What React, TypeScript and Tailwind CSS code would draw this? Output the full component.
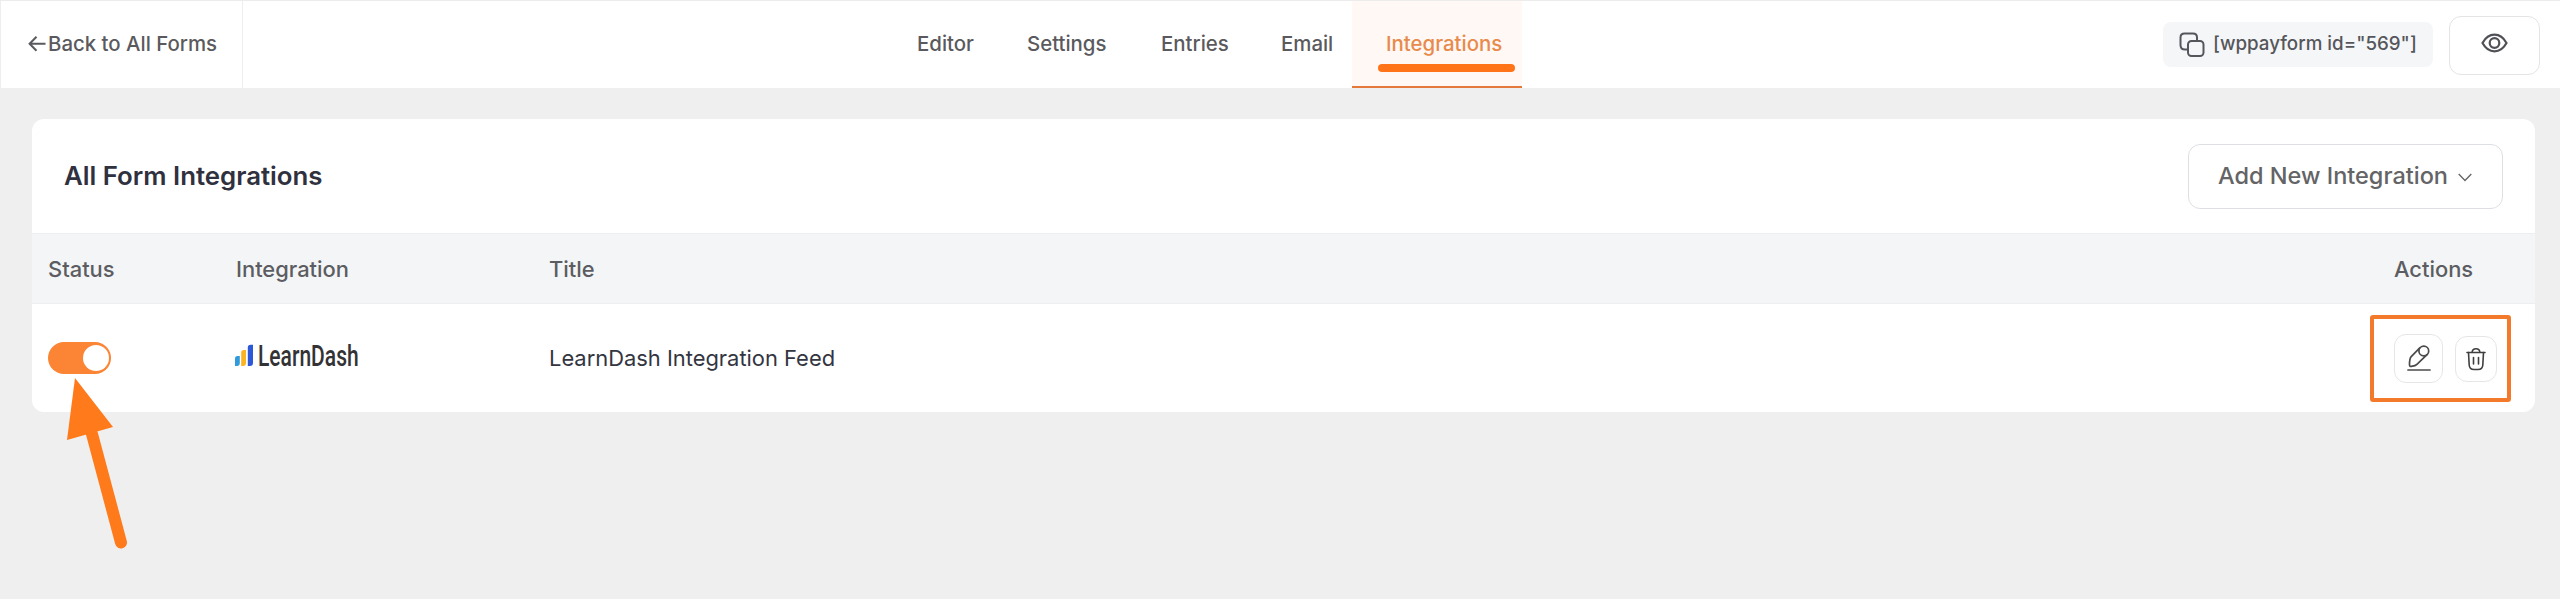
import React from 'react';

const tabs = [
  { label: 'Editor', width: 'w-[110px]' },
  { label: 'Settings', width: 'w-[134px]' },
  { label: 'Entries', width: 'w-[120px]' },
  { label: 'Email', width: 'w-[105px]' },
];

function BackArrow() {
  return (
    <svg className="h-[18px] w-[18px] shrink-0" viewBox="0 0 18 18" fill="none" stroke="#5a5a5e" strokeWidth="2">
      <path d="M17.500 8.700H2M8.500 1.700L1.600 8.700L8.500 15.700" />
    </svg>
  );
}

function CopyIcon() {
  return (
    <svg className="h-[26px] w-[26px] shrink-0" viewBox="0 0 26 26" fill="none" stroke="#55565b" strokeWidth="2">
      <path d="M9 17.500H6C3 17.500 1.500 16 1.500 13V5.500C1.500 3 3 1.500 5.500 1.500H14C16.500 1.500 18 3 18 5.500V9" />
      <rect x="9" y="9" width="15.500" height="15" rx="3.500" />
    </svg>
  );
}

function EyeIcon() {
  return (
    <svg className="h-[20px] w-[27px]" viewBox="0 0 27 20" fill="none" stroke="#505156" strokeWidth="2.200">
      <path d="M1.500 10C4.500 4.500 8.500 1.700 13.500 1.700S22.500 4.500 25.500 10C22.500 15.500 18.500 18.300 13.500 18.300S4.500 15.500 1.500 10Z" />
      <circle cx="13.500" cy="10" r="4.800" />
    </svg>
  );
}

function EditIcon() {
  return (
    <svg className="h-[28px] w-[24px]" viewBox="0 0 24 28" fill="none" stroke="#4b4b4d" strokeWidth="1.700" strokeLinecap="round" strokeLinejoin="round">
      <path d="M1 26H23" />
      <path d="M12.800 3.800L4.200 12.600C3 13.900 2.500 17.500 2.500 20.500C2.500 22 3 22.500 4.300 22.300C6.500 22 8.700 21.600 9.900 20.300L20.300 10.300" />
      <circle cx="16.800" cy="7" r="4.900" />
    </svg>
  );
}

function TrashIcon() {
  return (
    <svg className="h-[24px] w-[20px]" viewBox="0 0 20 24" fill="none" stroke="#3f3f41" strokeWidth="1.600" strokeLinecap="round" strokeLinejoin="round">
      <path d="M1 5.500H19M6 5.500C6.300 3 7.300 1.800 10 1.800S13.700 3 14 5.500" />
      <path d="M2.500 5.500L3.200 18C3.400 21.200 5 22.500 8 22.500H12C15 22.500 16.600 21.200 16.800 18L17.500 5.500" />
      <path d="M7.500 10.500V17M12.500 10.500V17" />
    </svg>
  );
}

function LearnDashLogo() {
  return (
    <div className="flex items-end gap-[4px] pb-[6px]">
      <svg className="h-[22px] w-[19px] shrink-0" viewBox="0 0 19 22">
        <path d="M0 22V14.500Q0 12 2.500 12H4.800V19Q4.800 22 1.800 22Z" fill="#2f9bdc" />
        <path d="M6.200 22V8.500Q6.200 6 8.700 6H11V19Q11 22 8 22Z" fill="#fbb524" />
        <path d="M12.800 22V3.500Q12.800 .7 15.600 .7H18V19Q18 22 15 22Z" fill="#2d58d8" />
      </svg>
      <span className="h-[22px] w-[100px] origin-left scale-x-[0.725] font-[Roboto] text-[29px] leading-[24px] font-medium whitespace-nowrap text-[#333335]">
        LearnDash
      </span>
    </div>
  );
}

function Header() {
  return (
    <header className="flex h-[88px] border-t border-[#ececec] bg-white">
      <a className="flex h-full w-[243px] shrink-0 items-center gap-[2px] border-x border-[#eeeeee] pb-0.5 pl-[27px] text-[20.400px] leading-[31px] font-medium whitespace-nowrap text-[#5a5a5e]">
        <BackArrow />
        Back to All Forms
      </a>
      <nav className="ml-[674px] flex h-full text-[20.400px] leading-[31px] font-medium text-[#5a5a5e]">
        {tabs.map((t) => (
          <a key={t.label} className={`flex h-full items-center pb-0.5 ${t.width}`}>{t.label}</a>
        ))}
        <a className="relative -ml-[34px] flex h-full w-[170px] items-center border-b-2 border-[#e5793c] bg-[#fff8f4] pl-[34px] text-[#e88a4c]">
          <span>Integrations</span>
          <span className="absolute top-[63px] left-[26px] h-2 w-[137px] rounded-full bg-[#ff7418]" />
        </a>
      </nav>
      <div className="ml-auto flex pr-[20px]">
        <div className="mt-[21px] flex h-[45px] w-[270px] items-center gap-[8px] rounded-lg bg-[#f5f6f8] pl-[16px] text-[18.750px] font-medium whitespace-nowrap text-[#55565b]">
          <CopyIcon />
          [wppayform id="569"]
        </div>
        <button className="mt-[15px] ml-4 flex h-[59px] w-[91px] items-start justify-center rounded-xl border border-[#e4e4e6] bg-white pt-[16px]">
          <EyeIcon />
        </button>
      </div>
    </header>
  );
}

export default function App() {
  return (
    <div className="relative h-[599px] w-[2560px] overflow-hidden bg-[#efefef] font-[Inter,sans-serif]">
      <Header />
      <main className="mt-[31px] ml-8 w-[2503px] overflow-hidden rounded-xl bg-white">
        <div className="flex h-[114px] items-center justify-between pr-8 pl-8">
          <h1 className="pt-px text-[25.800px] font-semibold text-[#30313f]">All Form Integrations</h1>
          <button className="flex h-[65px] w-[315px] items-center rounded-xl border border-[#dddfe3] pl-[29px] text-[23.500px] font-medium whitespace-nowrap text-[#646466]">
            Add New Integration
            <svg className="mt-0.5 ml-[10px] h-[9px] w-[14px]" viewBox="0 0 14 9" fill="none" stroke="#646466" strokeWidth="1.300">
              <path d="M.7 1L7 7.500L13.300 1" />
            </svg>
          </button>
        </div>
        <div className="flex h-[71px] items-center border-y border-[#eceef1] bg-[#f4f5f7] pt-px pl-4 text-[21.900px] font-medium text-[#5c5d62]">
          <div className="w-[188px]">Status</div>
          <div className="w-[313px]">Integration</div>
          <div className="flex-1">Title</div>
          <div className="w-[141px]">Actions</div>
        </div>
        <div className="flex h-[108px] items-center pl-4 text-[21.900px] text-[#333541]">
          <div className="w-[187px]">
            <div className="flex h-8 w-[63px] items-center justify-end rounded-full bg-[#fb8535] pr-[2px]">
              <div className="h-[26px] w-[26px] rounded-full bg-white" />
            </div>
          </div>
          <div className="w-[314px]"><LearnDashLogo /></div>
          <div className="flex-1">LearnDash Integration Feed</div>
          <div className="flex w-[141px] items-center gap-[12px]">
            <button className="flex h-[49px] w-[49px] items-center justify-center rounded-xl border border-[#e6e6e7]"><EditIcon /></button>
            <button className="mt-px flex h-[46px] w-[42px] items-center justify-center rounded-xl border border-[#e6e6e7]"><TrashIcon /></button>
          </div>
        </div>
      </main>
      <div className="pointer-events-none absolute top-[315px] left-[2370px] h-[87px] w-[141px] rounded-[3px] border-4 border-[#f37a2a]" />
      <svg className="pointer-events-none absolute top-[370px] left-[60px] h-[190px] w-[80px]" viewBox="60 370 80 190">
        <path d="M92 434L121 542.500" stroke="#ff7a1a" strokeWidth="12" strokeLinecap="round" />
        <path d="M75 378L113 427L67 440Z" fill="#ff7a1a" />
      </svg>
    </div>
  );
}
